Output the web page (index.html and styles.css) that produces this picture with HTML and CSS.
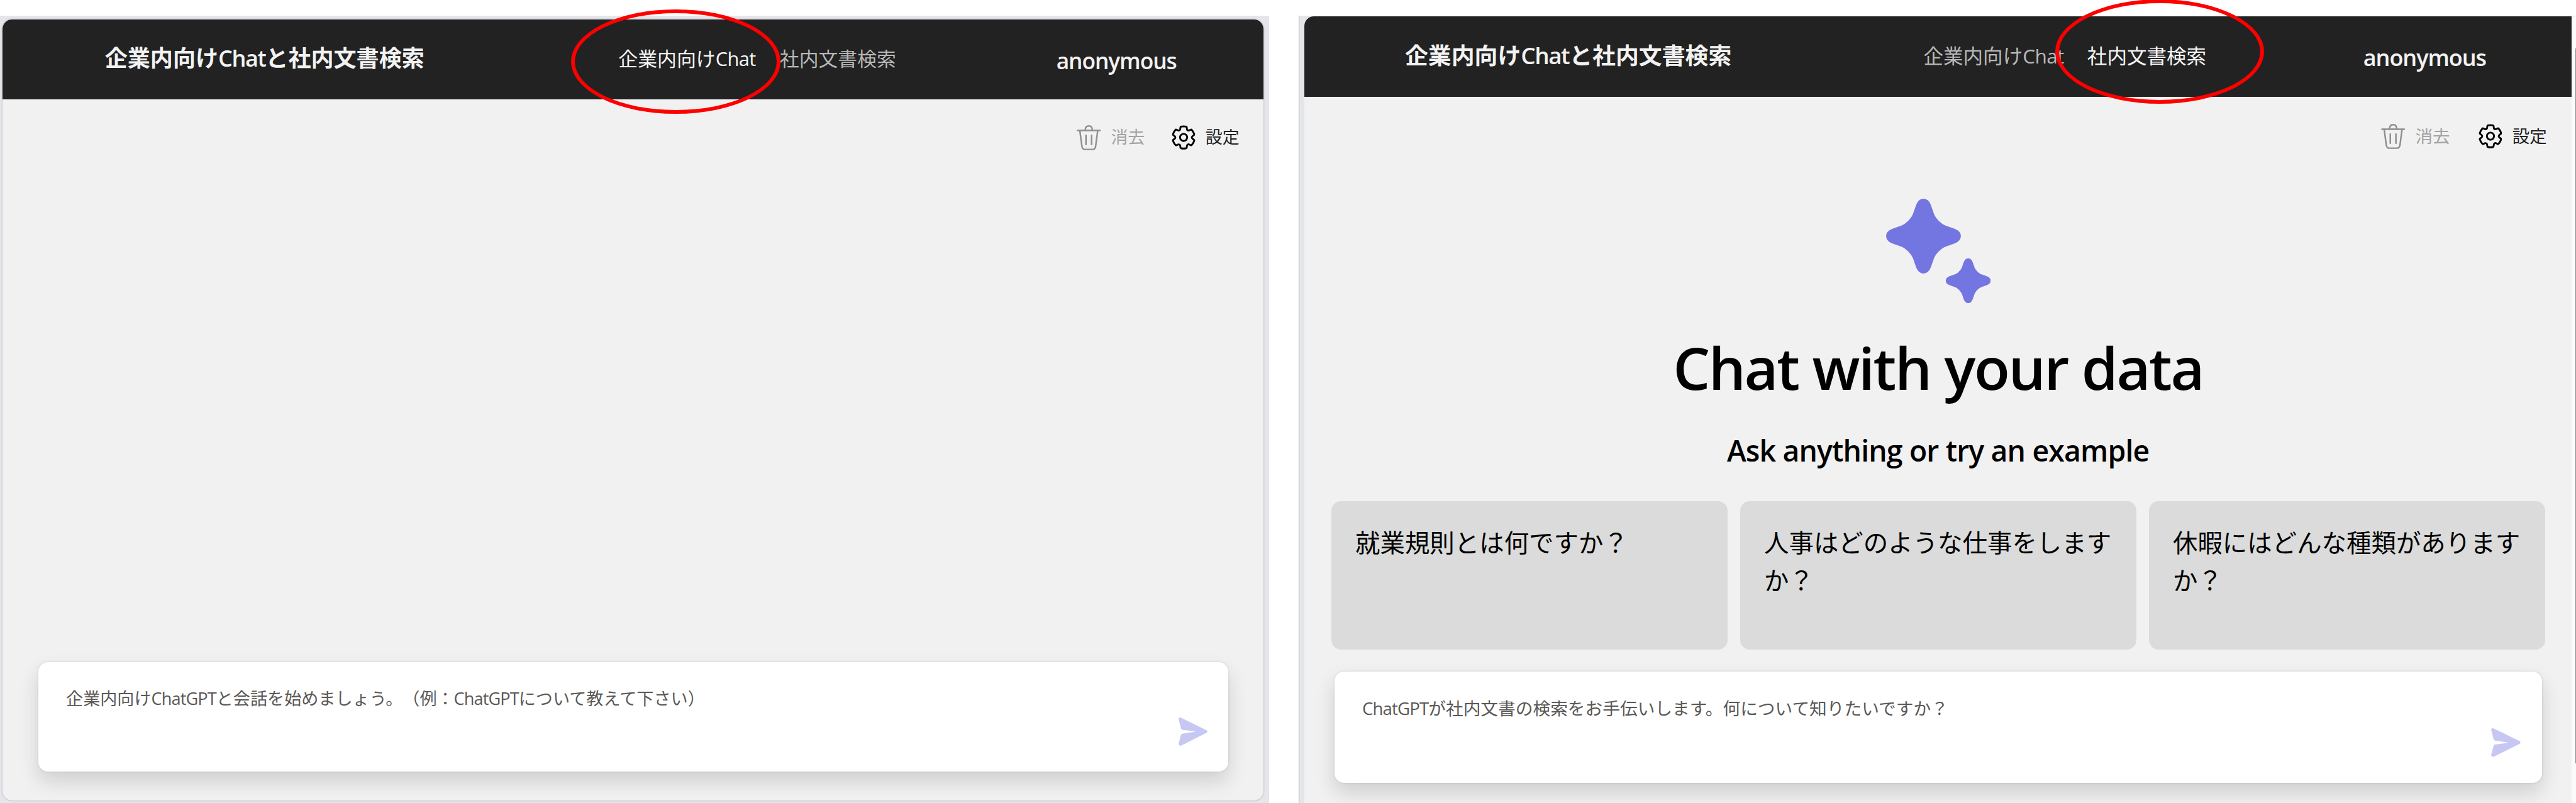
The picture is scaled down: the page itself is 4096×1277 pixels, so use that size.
FILE: index.html
```html
<!DOCTYPE html>
<html lang="ja">
<head>
<meta charset="utf-8">
<title>企業内向けChatと社内文書検索</title>
<link rel="stylesheet" href="styles.css">
</head>
<body>
<svg class="defs" aria-hidden="true">
  <symbol id="trash" viewBox="0 0 116 121">
    <g fill="none" stroke="currentColor" stroke-width="7.5" stroke-linecap="round" stroke-linejoin="round">
      <path d="M4 25.500H112"/>
      <path d="M41 24C41 11 47 4 58 4S75 11 75 24"/>
      <path d="M15 27L25 102Q27 117 40 117H76Q89 117 91 102L101 27"/>
      <path d="M44.500 49V93M71.500 49V93"/>
    </g>
  </symbol>
  <symbol id="gear" viewBox="2.300 2 19.400 20">
    <path fill="none" stroke="currentColor" stroke-width="1.600" stroke-linejoin="round" transform="translate(.9 .9) scale(.925)" d="M12.010 2.250C12.750 2.260 13.480 2.340 14.190 2.500C14.510 2.570 14.740 2.830 14.780 3.150L14.950 4.680C15.020 5.380 15.610 5.910 16.320 5.910C16.510 5.910 16.700 5.870 16.870 5.790L18.270 5.180C18.570 5.050 18.910 5.120 19.120 5.350C20.140 6.430 20.890 7.730 21.330 9.150C21.420 9.450 21.310 9.780 21.060 9.970L19.810 10.890C19.460 11.150 19.250 11.560 19.250 12C19.250 12.440 19.460 12.850 19.820 13.110L21.060 14.030C21.320 14.220 21.420 14.550 21.330 14.850C20.890 16.270 20.140 17.560 19.130 18.650C18.910 18.880 18.570 18.950 18.280 18.820L16.870 18.200C16.470 18.030 16.010 18.050 15.630 18.270C15.250 18.490 14.990 18.880 14.950 19.320L14.780 20.840C14.740 21.160 14.510 21.420 14.200 21.490C12.760 21.840 11.250 21.840 9.800 21.490C9.490 21.420 9.260 21.160 9.230 20.840L9.060 19.320C9.010 18.880 8.750 18.500 8.370 18.280C7.990 18.060 7.530 18.030 7.130 18.210L5.730 18.830C5.430 18.950 5.090 18.880 4.880 18.650C3.860 17.570 3.110 16.270 2.670 14.850C2.580 14.550 2.690 14.220 2.940 14.030L4.190 13.110C4.540 12.850 4.750 12.440 4.750 12C4.750 11.560 4.540 11.150 4.190 10.890L2.950 9.970C2.690 9.780 2.580 9.450 2.670 9.150C3.110 7.730 3.870 6.440 4.880 5.350C5.100 5.120 5.440 5.050 5.730 5.180L7.130 5.800C7.530 5.970 7.990 5.950 8.380 5.720C8.760 5.500 9.010 5.110 9.060 4.680L9.230 3.150C9.260 2.830 9.500 2.570 9.810 2.500C10.530 2.340 11.260 2.260 12.010 2.250Z"/>
    <circle cx="12" cy="12" r="2.900" fill="none" stroke="currentColor" stroke-width="1.500"/>
  </symbol>
  <symbol id="send" viewBox="0 0 142 137">
    <path fill="currentColor" d="M11 1L136 62Q142 68 136 74L12 136Q0 138 0 127L12 82Q14 79 18 78L76 70Q80 68.500 76 67L18 59Q14 58 12 54L0 9Q1 -2 11 1Z"/>
  </symbol>
  <symbol id="sparkle" viewBox="-60.300 -60.300 168.600 168.600">
    <path id="star" fill="currentColor" d="M12-50L16.500-37C19-29 29-19 37-16.500L50-12Q60.300-8 60.300 0T50 12L37 16.500C29 19 19 29 16.500 37L12 50Q8 60.300 0 60.300T-12 50L-16.500 37C-19 29-29 19-37 16.500L-50 12Q-60.300 8-60.300 0T-50-12L-37-16.500C-29-19-19-29-16.500-37L-12-50Q-8-60.300 0-60.300T12-50Z"/>
    <use href="#star" transform="translate(72.100 71.900) scale(.6)"/>
  </symbol>
</svg>

<section class="window window-chat">
  <div class="app">
    <header class="header">
      <h1 class="brand">企業内向け<span class="latin">Chat</span>と社内文書検索</h1>
      <nav class="nav">
        <a class="nav-link active">企業内向け<span class="latin">Chat</span></a>
        <a class="nav-link">社内文書検索</a>
      </nav>
      <div class="user">anonymous</div>
    </header>
    <div class="commands">
      <button class="command disabled"><svg class="icon-trash"><use href="#trash"/></svg><span>消去</span></button>
      <button class="command"><svg class="icon-gear"><use href="#gear"/></svg><span>設定</span></button>
    </div>
    <main class="content"></main>
    <div class="question">
      <p class="placeholder">企業内向け<span class="latin">ChatGPT</span>と会話を始めましょう。（例：<span class="latin">ChatGPT</span>について教えて下さい）</p>
      <svg class="icon-send"><use href="#send"/></svg>
    </div>
  </div>
  <div class="marker"></div>
</section>

<section class="window window-docs">
  <div class="app">
    <header class="header">
      <h1 class="brand">企業内向け<span class="latin">Chat</span>と社内文書検索</h1>
      <nav class="nav">
        <a class="nav-link">企業内向け<span class="latin">Chat</span></a>
        <a class="nav-link active">社内文書検索</a>
      </nav>
      <div class="user">anonymous</div>
    </header>
    <div class="commands">
      <button class="command disabled"><svg class="icon-trash"><use href="#trash"/></svg><span>消去</span></button>
      <button class="command"><svg class="icon-gear"><use href="#gear"/></svg><span>設定</span></button>
    </div>
    <main class="content">
      <svg class="icon-sparkle"><use href="#sparkle"/></svg>
      <h2 class="headline">Chat with your data</h2>
      <h3 class="subline">Ask anything or try an example</h3>
      <div class="examples">
        <div class="example">就業規則とは何ですか？</div>
        <div class="example">人事はどのような仕事をしますか？</div>
        <div class="example">休暇にはどんな種類がありますか？</div>
      </div>
    </main>
    <div class="question">
      <p class="placeholder"><span class="latin">ChatGPT</span>が社内文書の検索をお手伝いします。何について知りたいですか？</p>
      <svg class="icon-send"><use href="#send"/></svg>
    </div>
  </div>
  <div class="scroll-edge"><div class="scroll-thumb"></div></div>
  <div class="marker"></div>
</section>
</body>
</html>
```
FILE: styles.css
```css
/* 1rem stands for 100 design pixels */
html {
  font-size: 98.63px;
}

* {
  box-sizing: border-box;
}

body {
  display: flex;
  gap: 0.48rem;
  height: 1277px;
  margin: 0;
  padding-top: 0.25rem;
  overflow: hidden;
  background: #fff;
  font-family: "Noto Sans CJK JP", sans-serif;
  text-spacing-trim: space-all;
}

.defs {
  position: absolute;
  width: 0;
  height: 0;
}

.latin,
.user,
.headline,
.subline {
  font-family: "Open Sans", sans-serif;
}

h1,
h2,
h3,
p {
  margin: 0;
}

.window {
  position: relative;
  flex: none;
  background: #e5e6ea;
}

.window-chat {
  width: 20.46rem;
  padding: 0.065rem 0.09rem 0.04rem 0.045rem;
}

.window-docs {
  display: flex;
  width: 20.59rem;
  padding-left: 0.08rem;
  border-top: 0.02rem solid #dedede;
  border-left: 1px solid #a2a4a8;
}

.app {
  display: flex;
  flex-direction: column;
  height: 100%;
  overflow: hidden;
  background: #f1f1f1;
}

.window-chat .app {
  border-radius: 0.155rem;
  box-shadow: 0 0 0.03rem rgba(0, 0, 40, 0.3);
}

.window-docs .app {
  width: 20.43rem;
  border-radius: 0.155rem 0 0 0;
}

.header {
  display: grid;
  flex: none;
  align-items: center;
  background: #222;
  color: #f2f2f2;
  white-space: nowrap;
}

.window-chat .header {
  grid-template-columns: 8.28rem 7.06rem auto;
  height: 1.285rem;
  padding-left: 1.645rem;
}

.window-docs .header {
  grid-template-columns: 8.36rem 7.09rem auto;
  height: 1.305rem;
  padding-left: 1.62rem;
}

.brand {
  padding-bottom: 0.08rem;
  font-size: 0.366rem;
  font-weight: 700;
}

.brand .latin {
  font-weight: 600;
  letter-spacing: -0.04em;
}

.nav {
  display: grid;
  grid-template-columns: 2.6rem auto;
  padding-bottom: 0.06rem;
  font-size: 0.313rem;
}

.nav .latin {
  letter-spacing: -0.02em;
}

.nav-link {
  color: #b8b8b8;
}

.nav-link.active {
  color: #f6f6f6;
}

.user {
  padding-top: 0.03rem;
  font-size: 0.358rem;
  font-weight: 600;
  letter-spacing: -0.03em;
}

.window-docs .brand {
  font-size: 0.374rem;
}

.window-docs .user {
  font-size: 0.366rem;
}

.window-docs .nav {
  grid-template-columns: 2.64rem auto;
  font-size: 0.32rem;
}

.commands {
  display: flex;
  flex: none;
  justify-content: flex-end;
  gap: 0.435rem;
  padding: 0.42rem 0.39rem 0 0;
}

.command {
  display: flex;
  align-items: center;
  gap: 0.16rem;
  height: 0.4rem;
  padding: 0;
  border: 0;
  background: none;
  color: #222;
  font: 0.273rem "Noto Sans CJK JP", sans-serif;
}

.command span {
  padding-bottom: 0.04rem;
}

.command.disabled {
  color: #a3a3a3;
}

.icon-trash {
  width: 0.39rem;
  height: 0.405rem;
  color: #8f8f8f;
}

.icon-gear {
  width: 0.385rem;
  height: 0.397rem;
  color: #000;
}

.window-docs .commands {
  gap: 0.455rem;
  padding: 0.435rem 0.4rem 0 0;
}

.window-docs .command {
  gap: 0.165rem;
  font-size: 0.279rem;
}

.content {
  display: flex;
  flex: 1;
  flex-direction: column;
  align-items: center;
  min-height: 0;
}

.icon-sparkle {
  flex: none;
  width: 1.686rem;
  height: 1.686rem;
  margin-top: 0.8rem;
  color: #7376e1;
}

.headline {
  height: 1.3rem;
  margin-top: 0.39rem;
  color: #000;
  font-size: 0.945rem;
  font-weight: 600;
  letter-spacing: -0.026em;
  line-height: 1.3rem;
  white-space: nowrap;
}

.subline {
  height: 0.66rem;
  margin-top: 0.36rem;
  color: #000;
  font-size: 0.47rem;
  font-weight: 600;
  letter-spacing: -0.018em;
  line-height: 0.66rem;
  white-space: nowrap;
}

.examples {
  display: grid;
  grid-template-columns: repeat(3, 1fr);
  gap: 0.2rem;
  width: 19.57rem;
  margin-top: 0.484rem;
}

.example {
  height: 2.39rem;
  padding: 0.345rem 0.38rem 0 0.39rem;
  border-radius: 0.155rem;
  background: #dbdbdb;
  color: #000;
  font-size: 0.4rem;
  line-height: 0.61rem;
}

.question {
  display: flex;
  flex: none;
  justify-content: space-between;
  border-radius: 0.155rem;
  background: #fff;
  box-shadow: 0 0.16rem 0.32rem rgba(0, 0, 0, 0.14), 0 0 0.04rem rgba(0, 0, 0, 0.12);
}

.window-chat .question {
  height: 1.763rem;
  margin: 0 0.565rem 0.47rem 0.575rem;
  padding: 0.38rem 0.335rem 0 0.445rem;
}

.window-docs .question {
  height: 1.8rem;
  margin: 0 0.48rem 0.32rem;
  padding: 0.39rem 0.335rem 0 0.45rem;
}

.placeholder {
  color: #5a5856;
  font-size: 0.275rem;
  line-height: 0.4rem;
  white-space: nowrap;
}

.placeholder .latin {
  letter-spacing: -0.033em;
}

.window-docs .placeholder {
  font-size: 0.281rem;
}

.icon-send {
  width: 0.475rem;
  height: 0.457rem;
  margin-top: 0.51rem;
  color: #c7c7f4;
}

.window-docs .icon-send {
  width: 0.485rem;
  height: 0.465rem;
  margin-top: 0.52rem;
}

.scroll-edge {
  display: flex;
  flex: 1;
  justify-content: flex-end;
  padding: 0.52rem 0 0.64rem;
  background: #fbfbfb;
}

.scroll-thumb {
  width: 1px;
  background: #8c8c8c;
}

/* Highlight rings over the active tab */
.marker {
  position: absolute;
  width: 3.37rem;
  height: 1.685rem;
  border: 0.07rem solid #f00;
  border-radius: 50%;
}

.window-chat .marker {
  top: -0.095rem;
  left: 9.21rem;
}

.window-docs .marker {
  top: -0.27rem;
  left: 12.18rem;
}
```
